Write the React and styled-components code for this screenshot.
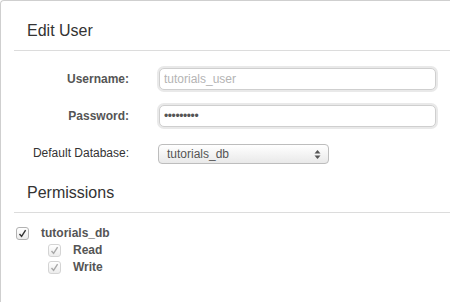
import styled, { createGlobalStyle } from "styled-components";

const GlobalStyle = createGlobalStyle`
  body {
    margin: 0;
    background: #fff;
    font-family: "Liberation Sans", Arial, sans-serif;
  }
`;

const App = () => {
  return (
    <>
      <GlobalStyle />
      <Panel>
        <Heading $top={21}>Edit User</Heading>
        <Form>
          <Label>Username:</Label>
          <TextInput type="text" placeholder="tutorials_user" />
          <Label>Password:</Label>
          <TextInput type="password" defaultValue="secret123" />
          <Label $light>Default Database:</Label>
          <SelectBox>
            <span>tutorials_db</span>
            <Arrows viewBox="0 0 7 11">
              <path d="M3.5 1 L6.5 4.5 H0.5 Z" fill="#555" />
              <path d="M3.5 10 L6.5 6.5 H0.5 Z" fill="#555" />
            </Arrows>
          </SelectBox>
        </Form>
        <Heading $top={20}>Permissions</Heading>
        <Perms>
          <PermRow>
            <Check />
            <PermLabel>tutorials_db</PermLabel>
          </PermRow>
          <PermRow $child>
            <Check $disabled />
            <PermLabel>Read</PermLabel>
          </PermRow>
          <PermRow $child>
            <Check $disabled />
            <PermLabel>Write</PermLabel>
          </PermRow>
        </Perms>
      </Panel>
    </>
  );
};

const Check = ({ $disabled }) => (
  <Box $disabled={$disabled}>
    <svg width="9" height="9" viewBox="0 0 9 9">
      <path
        d="M1.5 5 L3.6 7.4 L7.6 1.2"
        fill="none"
        stroke={$disabled ? "#a8a8a8" : "#333"}
        strokeWidth="1.4"
      />
    </svg>
  </Box>
);

const Panel = styled.div`
  border-top: 1px solid #cfcfcf;
  border-left: 1px solid #cfcfcf;
  border-top-left-radius: 4px;
  min-height: 301px;
`;

const Heading = styled.h2`
  margin: 0 0 0 13px;
  padding: ${(p) => p.$top}px 0 10px 13px;
  border-bottom: 1px solid #dcdcdc;
  font-size: 16px;
  line-height: 18px;
  font-weight: normal;
  color: #333;
`;

const Form = styled.div`
  display: grid;
  grid-template-columns: 128px 280px;
  column-gap: 30px;
  row-gap: 15px;
  align-items: center;
  padding: 17px 0 0;
`;

const Label = styled.label`
  text-align: right;
  font-size: 12px;
  font-weight: ${(p) => (p.$light ? "normal" : "bold")};
  color: ${(p) => (p.$light ? "#333" : "#555")};
`;

const TextInput = styled.input`
  box-sizing: border-box;
  width: 277px;
  height: 22px;
  margin: 0;
  padding: 0 4px;
  border: 1px solid #cfcfcf;
  border-radius: 5px;
  box-shadow: 0 0 0 2px #e9e9e9;
  font-family: "Liberation Sans", Arial, sans-serif;
  font-size: 12px;
  letter-spacing: -0.4px;
  color: #555;
  outline: none;
  &::placeholder {
    color: #b4b4b4;
    letter-spacing: 0;
  }
`;

const SelectBox = styled.div`
  box-sizing: border-box;
  width: 171px;
  height: 20px;
  margin-left: -1px;
  margin-top: 2px;
  display: flex;
  align-items: center;
  justify-content: space-between;
  padding: 0 7px 0 8px;
  border: 1px solid #bdbdbd;
  border-radius: 4px;
  background: linear-gradient(#ffffff, #e9e9e9);
  font-size: 12px;
  color: #555;
`;

const Arrows = styled.svg`
  width: 7px;
  height: 11px;
`;

const Perms = styled.div`
  display: flex;
  flex-direction: column;
  gap: 4px;
  padding: 14px 0 0 15px;
`;

const PermRow = styled.div`
  display: flex;
  align-items: center;
  gap: 12px;
  padding-left: ${(p) => (p.$child ? 32 : 0)}px;
`;

const Box = styled.span`
  box-sizing: border-box;
  width: 13px;
  height: 13px;
  display: flex;
  align-items: center;
  justify-content: center;
  border: 1px solid ${(p) => (p.$disabled ? "#d4d4d4" : "#b2b2b2")};
  border-radius: 3px;
  background: linear-gradient(#ffffff, #ececec);
`;

const PermLabel = styled.span`
  font-size: 12px;
  font-weight: bold;
  color: #555;
  line-height: 13px;
`;

export default App;
